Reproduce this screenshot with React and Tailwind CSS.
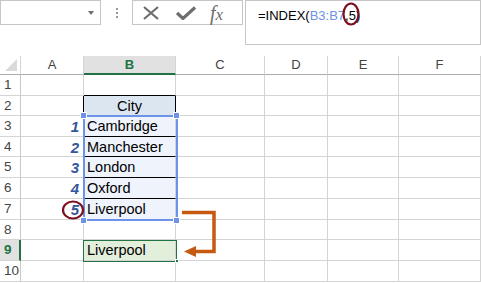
import React from "react";

const cols = [
  { key: "", w: "w-[21px]" },
  { key: "A", w: "w-[63px]" },
  { key: "B", w: "w-[92px]" },
  { key: "C", w: "w-[89px]" },
  { key: "D", w: "w-[63px]" },
  { key: "E", w: "w-[71px]" },
  { key: "F", w: "w-[82px]" },
];

const rowHeights = {
  1: "h-[21px]",
  2: "h-[20px]",
  3: "h-[21px]",
  4: "h-[20px]",
  5: "h-[21px]",
  6: "h-[21px]",
  7: "h-[21px]",
  8: "h-[20px]",
  9: "h-[21px]",
  10: "h-[21px]",
};

const cities = { 3: "Cambridge", 4: "Manchester", 5: "London", 6: "Oxford", 7: "Liverpool" };

function Cell({ row, col }) {
  let cls = "border-r border-b border-[#d4d4d4] bg-white";
  let content = null;

  if (col === "A" && row === 2) cls = "border-r border-b border-r-black border-b-[#d4d4d4] bg-white";
  if (col === "A" && row >= 3 && row <= 7) {
    content = (
      <span className="w-full pr-[4px] text-right text-[15px] font-bold italic text-[#35569c]">{row - 2}</span>
    );
  }
  if (col === "B") {
    if (row === 1) cls = "border-r border-b border-r-[#d4d4d4] border-b-black bg-white";
    if (row === 2) {
      cls = "border-r border-b border-black bg-[#dce6f1]";
      content = <span className="w-full text-center">City</span>;
    }
    if (row >= 3 && row <= 7) {
      cls = "border-r border-b border-r-[#d4d4d4] border-b-black bg-[#eef3fc]";
      content = <span className="pl-[3px]">{cities[row]}</span>;
    }
    if (row === 9) {
      cls = "border-r border-b border-[#d4d4d4] bg-[#e2efda]";
      content = <span className="pl-[3px]">Liverpool</span>;
    }
  }

  const w = cols.find((c) => c.key === col).w;
  return (
    <div className={`${w} ${rowHeights[row]} ${cls} flex shrink-0 items-center pt-[1px] text-[14.5px] leading-none text-black`}>
      {content}
    </div>
  );
}

function TopBar() {
  return (
    <div className="flex h-[56px] items-start bg-white">
      <div className="relative h-[25px] w-[101px] shrink-0 border border-[#c6c6c6]">
        <span className="absolute left-[87px] top-[10px] h-0 w-0 border-x-[3.5px] border-t-[4px] border-x-transparent border-t-[#6d6d6d]" />
      </div>
      <div className="flex w-[31px] shrink-0 flex-col items-center gap-[2px] pt-[8px]">
        <span className="h-[2px] w-[2px] bg-[#9a9a9a]" />
        <span className="h-[2px] w-[2px] bg-[#9a9a9a]" />
        <span className="h-[2px] w-[2px] bg-[#9a9a9a]" />
      </div>
      <div className="flex h-[25px] w-[111px] shrink-0 items-center border border-[#c6c6c6]">
        <svg width="18" height="14" viewBox="0 0 18 14" className="ml-[9px]">
          <path d="M2 1 L16 13 M16 1 L2 13" stroke="#6d6d6d" strokeWidth="2.2" fill="none" />
        </svg>
        <svg width="20" height="14" viewBox="0 0 20 14" className="ml-[16px]">
          <path d="M1 7 L7 12.5 L19 1.5" stroke="#6d6d6d" strokeWidth="3.2" fill="none" strokeLinejoin="miter" />
        </svg>
        <span className="ml-[14px] font-['Liberation_Serif',serif] text-[20px] italic leading-none text-[#6d6d6d]">
          f<span className="text-[17px]">x</span>
        </span>
      </div>
      <div className="ml-[2px] h-[45px] flex-1 border border-[#c6c6c6] pl-[12px] pt-[5px] text-[13px] text-black">
        =INDEX(<span className="text-[#6f93e4]">B3:B7</span>,5)
      </div>
    </div>
  );
}

function ColHeaders() {
  return (
    <div className="flex">
      {cols.map((c) => {
        if (c.key === "") {
          return (
            <div key="corner" className="relative h-[19px] w-[21px] shrink-0 border-r border-b border-r-[#d4d4d4] border-b-[#ababab]">
              <svg width="12" height="12" className="absolute left-[5px] top-[3px]">
                <path d="M12 0 L12 12 L0 12 Z" fill="#dadada" />
              </svg>
            </div>
          );
        }
        const active = c.key === "B";
        return (
          <div
            key={c.key}
            className={`${c.w} h-[19px] shrink-0 border-r border-r-[#d4d4d4] text-center text-[13px] leading-[18px] ${
              active
                ? "border-b-2 border-b-[#217346] bg-[#e1e1e1] font-bold text-[#217346]"
                : "border-b border-b-[#ababab] bg-white text-[#444]"
            }`}
          >
            {c.key}
          </div>
        );
      })}
    </div>
  );
}

function Row({ n }) {
  const active = n === 9;
  return (
    <div className="flex">
      <div
        className={`w-[21px] ${rowHeights[n]} flex shrink-0 items-center border-b border-[#d4d4d4] pl-[4px] text-[13.5px] leading-none ${
          active
            ? "border-r-2 border-r-[#217346] bg-[#e1e1e1] font-bold text-[#217346]"
            : "border-r border-r-[#c8c8c8] bg-white text-[#444]"
        }`}
      >
        {n}
      </div>
      {cols.slice(1).map((c) => (
        <Cell key={c.key} row={n} col={c.key} />
      ))}
    </div>
  );
}

function Handle({ className }) {
  return <span className={`absolute h-[7px] w-[7px] border border-white bg-[#6d93e8] ${className}`} />;
}

export default function App() {
  return (
    <div className="relative h-[283px] w-[481px] overflow-hidden bg-white font-['Liberation_Sans',Arial,sans-serif]">
      <TopBar />
      <ColHeaders />
      {[1, 2, 3, 4, 5, 6, 7, 8, 9, 10].map((n) => (
        <Row key={n} n={n} />
      ))}

      {/* selection B3:B7 */}
      <div className="absolute left-[83px] top-[115px] h-[106px] w-[95px] border-2 border-[#6d93e8]" />
      <Handle className="left-[80px] top-[112px]" />
      <Handle className="left-[173px] top-[112px]" />
      <Handle className="left-[80px] top-[217px]" />
      <Handle className="left-[173px] top-[217px]" />

      {/* B9 result */}
      <div className="absolute left-[83px] top-[240px] h-[22px] w-[94px] border border-[#217346]" />
      <span className="absolute left-[175px] top-[259px] h-[4px] w-[4px] border border-white bg-[#217346]" />

      {/* arrow and circles */}
      <svg className="absolute left-0 top-0" width="481" height="283">
        <path d="M182 212.5 L214 212.5 L214 251.5 L194 251.5" stroke="#c55a11" strokeWidth="3.5" fill="none" />
        <path d="M184 251.5 L196 246 L196 257 Z" fill="#c55a11" />
        <ellipse cx="351" cy="14" rx="7.5" ry="10.5" stroke="#7b0f1e" strokeWidth="2.2" fill="none" />
        <ellipse cx="73" cy="210" rx="10" ry="8.5" stroke="#7b0f1e" strokeWidth="2.2" fill="none" />
      </svg>
    </div>
  );
}
